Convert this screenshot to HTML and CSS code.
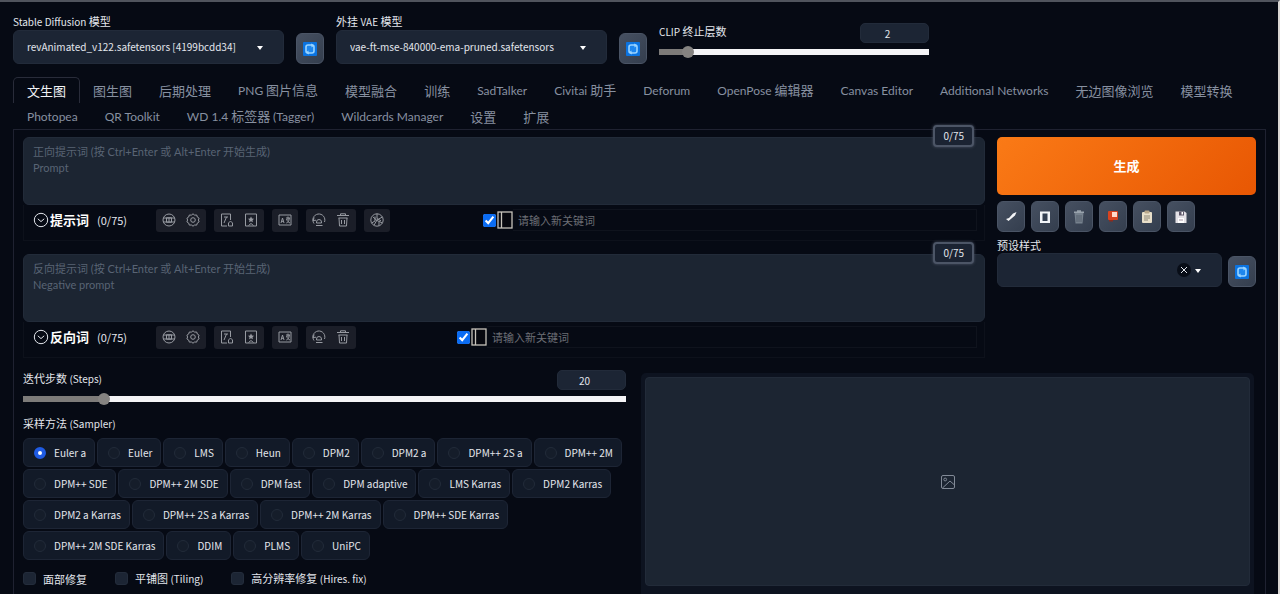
FILE: index.html
```html
<!DOCTYPE html>
<html lang="zh-CN">
<head>
<meta charset="utf-8">
<meta name="viewport" content="width=device-width, initial-scale=1">
<title>Stable Diffusion</title>
<link rel="stylesheet" href="styles.css">
</head>
<body>
<svg class="sprite" aria-hidden="true">
  <symbol id="i-refresh" viewBox="0 0 14 14"><rect width="14" height="14" rx="1" fill="#0b73e0"/><rect x="3" y="3" width="8" height="8" rx="2" fill="#1d86ee" stroke="#9ad4ff" stroke-width="1.6"/><path d="M8 1.600l3.400 1.600L8.600 5.600zM6 12.400L2.600 10.800 5.400 8.400z" fill="#9ad4ff"/></symbol>
  <symbol id="i-down" viewBox="0 0 16 16"><circle cx="8" cy="8" r="6.700"/><path d="M4.800 6.800L8 9.600l3.200-2.800"/></symbol>
  <symbol id="i-globe" viewBox="0 0 16 16"><circle cx="8" cy="8" r="6"/><path d="M2 6h12M2 10h12M5.500 5.800h5v4.400h-5zM8 5.800v4.400"/></symbol>
  <symbol id="i-gear" viewBox="0 0 16 16"><path d="M8 1.800l1.600 1.300 2.100-.1.600 2 1.800 1.200L13.400 8l.7 1.900-1.800 1.200-.6 2-2.100-.1L8 14.200 6.400 13l-2.100.1-.6-2-1.800-1.200L2.600 8l-.7-1.800L3.700 5l.6-2 2.100.1z"/><circle cx="8" cy="8" r="2.300"/></symbol>
  <symbol id="i-note" viewBox="0 0 16 16"><path d="M8 14H2.500V2h9v6M5 5h4M7.500 5L5 11M13.500 14h-4v-3l2-2 2 2z"/></symbol>
  <symbol id="i-bookmark" viewBox="0 0 16 16"><path d="M2.500 2h11v12h-11z"/><path d="M8 4.500l1 2 2 .3-1.500 1.400.4 2.100L8 9.300l-1.900 1 .4-2.100L5 6.800l2-.3z" fill="currentColor" stroke="none"/><path d="M5.500 13.500L8 11.500l2.500 2"/></symbol>
  <symbol id="i-translate" viewBox="0 0 16 16"><path d="M2 3h12v10H2zM4 11l1.500-5L7 11M4.500 9.300h2M9 6h4M11 4.500V8M9.300 11c2-.6 3-2.500 3-5M9.500 7c.5 2 2 3.400 3.500 4"/></symbol>
  <symbol id="i-history" viewBox="0 0 16 16"><path d="M3 11.500A6 6 0 1 1 13.500 10M3.200 5.500L2 8.500l3-.3M5 13.500h6.500M5.500 10a2.500 2.500 0 0 1 5 0v1h-5z"/></symbol>
  <symbol id="i-trash" viewBox="0 0 16 16"><path d="M2 3.500h12M5.500 3.500V1.800h5v1.700M3.500 6h9M4 6l.5 8h7L12 6M6.500 8v4M9.500 8v4"/></symbol>
  <symbol id="i-openai" viewBox="0 0 16 16"><circle cx="8" cy="8" r="6.200"/><path d="M8 1.800v4.700l4 2.400M13.400 5L8 8l-3 5.200M13.400 11L8 8.500 4 5M2.600 11L6 9V4.500M10 13.800V9.500"/></symbol>
  <symbol id="i-caret" viewBox="0 0 16 18"><rect x="1" y="1" width="14" height="16" fill="#07080f" stroke="#c7c3bb" stroke-width="1.300"/><path d="M4.500 1v16" stroke="#c7c3bb" stroke-width="1.300"/></symbol>
  <symbol id="i-image" viewBox="0 0 16 16"><rect x="1.500" y="1.500" width="13" height="13" rx="1.500"/><circle cx="5.200" cy="5.500" r="1.400"/><path d="M2.500 14L10 7l4.500 4"/></symbol>
</svg>

<main class="app">
  <section class="quick">
    <div class="field">
      <label for="model"><span class="en">Stable Diffusion</span> 模型</label>
      <div class="drop"><select id="model"><option>revAnimated_v122.safetensors [4199bcdd34]</option></select></div>
    </div>
    <button class="tool" aria-label="刷新模型"><svg class="refresh"><use href="#i-refresh"/></svg></button>
    <div class="field">
      <label for="vae">外挂 <span class="en">VAE</span> 模型</label>
      <div class="drop"><select id="vae"><option>vae-ft-mse-840000-ema-pruned.safetensors</option></select></div>
    </div>
    <button class="tool" aria-label="刷新 VAE"><svg class="refresh"><use href="#i-refresh"/></svg></button>
    <div class="slider">
      <div class="slider-head"><label for="clip"><span class="en">CLIP</span> 终止层数</label><input class="num" type="number" value="2" aria-label="CLIP"></div>
      <input id="clip" class="range" type="range" min="1" max="12" value="2" style="--fill:11%">
    </div>
  </section>

  <nav class="tabs">
    <button class="tab active">文生图</button><button class="tab">图生图</button><button class="tab">后期处理</button><button class="tab"><span class="en">PNG</span> 图片信息</button><button class="tab">模型融合</button><button class="tab">训练</button><button class="tab"><span class="en">SadTalker</span></button><button class="tab"><span class="en">Civitai</span> 助手</button><button class="tab"><span class="en">Deforum</span></button><button class="tab"><span class="en">OpenPose</span> 编辑器</button><button class="tab"><span class="en">Canvas Editor</span></button><button class="tab"><span class="en">Additional Networks</span></button><button class="tab">无边图像浏览</button><button class="tab">模型转换</button><button class="tab"><span class="en">Photopea</span></button><button class="tab"><span class="en">QR Toolkit</span></button><button class="tab"><span class="en">WD 1.4</span> 标签器 <span class="en">(Tagger)</span></button><button class="tab"><span class="en">Wildcards Manager</span></button><button class="tab">设置</button><button class="tab">扩展</button>
  </nav>

  <section class="panel">
    <div class="top">
      <div class="prompts">
        <div class="prompt">
          <textarea aria-label="正向提示词" placeholder="正向提示词 (按 Ctrl+Enter 或 Alt+Enter 开始生成)&#10;Prompt"></textarea>
          <span class="count">0/75</span>
          <div class="bar">
            <div class="bar-title"><svg class="line"><use href="#i-down"/></svg><b>提示词</b><span>(0/75)</span></div>
            <div class="groups">
              <div class="group"><button aria-label="语言"><svg class="line"><use href="#i-globe"/></svg></button><button aria-label="设置"><svg class="line"><use href="#i-gear"/></svg></button></div>
              <div class="group"><button aria-label="历史"><svg class="line"><use href="#i-note"/></svg></button><button aria-label="收藏"><svg class="line"><use href="#i-bookmark"/></svg></button></div>
              <div class="group"><button aria-label="翻译"><svg class="line"><use href="#i-translate"/></svg></button></div>
              <div class="group"><button aria-label="复制"><svg class="line"><use href="#i-history"/></svg></button><button aria-label="删除"><svg class="line"><use href="#i-trash"/></svg></button></div>
              <div class="group"><button aria-label="ChatGPT"><svg class="line"><use href="#i-openai"/></svg></button></div>
            </div>
            <div class="keyword"><input type="checkbox" checked aria-label="启用"><svg class="side"><use href="#i-caret"/></svg><input type="text" placeholder="请输入新关键词" aria-label="新关键词"></div>
          </div>
        </div>
        <div class="prompt">
          <textarea aria-label="反向提示词" placeholder="反向提示词 (按 Ctrl+Enter 或 Alt+Enter 开始生成)&#10;Negative prompt"></textarea>
          <span class="count">0/75</span>
          <div class="bar negative">
            <div class="bar-title"><svg class="line"><use href="#i-down"/></svg><b>反向词</b><span>(0/75)</span></div>
            <div class="groups">
              <div class="group"><button aria-label="语言"><svg class="line"><use href="#i-globe"/></svg></button><button aria-label="设置"><svg class="line"><use href="#i-gear"/></svg></button></div>
              <div class="group"><button aria-label="历史"><svg class="line"><use href="#i-note"/></svg></button><button aria-label="收藏"><svg class="line"><use href="#i-bookmark"/></svg></button></div>
              <div class="group"><button aria-label="翻译"><svg class="line"><use href="#i-translate"/></svg></button></div>
              <div class="group"><button aria-label="复制"><svg class="line"><use href="#i-history"/></svg></button><button aria-label="删除"><svg class="line"><use href="#i-trash"/></svg></button></div>
            </div>
            <div class="keyword"><input type="checkbox" checked aria-label="启用"><svg class="side"><use href="#i-caret"/></svg><input type="text" placeholder="请输入新关键词" aria-label="新关键词"></div>
          </div>
        </div>
      </div>

      <div class="actions">
        <button class="generate">生成</button>
        <div class="tools">
          <button class="tool" aria-label="读取参数"><svg viewBox="0 0 16 16"><path d="M3 10l2.500 2L12 6.500 13.500 3 10 4.500 6 9z" fill="#f4f5f7"/></svg></button>
          <button class="tool" aria-label="面板"><svg viewBox="0 0 16 16"><rect x="3" y="2.500" width="10" height="11.500" fill="#f1f4f8"/><rect x="5.500" y="4.500" width="5" height="7.500" fill="#344052"/></svg></button>
          <button class="tool" aria-label="清空"><svg viewBox="0 0 16 16"><path d="M3.500 4h9l-1 10.500h-7z" fill="#76818d"/><path d="M3 3.300h10M6 2h4" stroke="#98a2ac" stroke-width="1.500"/><path d="M6 6v7M8 6v7M10 6v7" stroke="#56616e"/></svg></button>
          <button class="tool" aria-label="附加网络"><svg viewBox="0 0 16 16"><rect x="3" y="2" width="10" height="9" rx="1" fill="#d8431f"/><rect x="7" y="3" width="5" height="5" fill="#ffd9ca"/><path d="M4 11h4v1.500H4z" fill="#8e2a1c"/></svg></button>
          <button class="tool" aria-label="应用样式"><svg viewBox="0 0 16 16"><rect x="3" y="3" width="10" height="11" rx="1" fill="#e9dfc9"/><rect x="5.500" y="1.500" width="5" height="3" rx="1" fill="#b9a88b"/><path d="M5 7h6M5 9h6M5 11h4" stroke="#8c8677"/></svg></button>
          <button class="tool" aria-label="保存样式"><svg viewBox="0 0 16 16"><path d="M2.500 2.500h9L13.500 4v10h-11z" fill="#e4e1e6"/><path d="M6 2.500h5v4H6z" fill="#5d5669"/><path d="M8.500 3h1.500v2.500H8.500z" fill="#fff"/><path d="M5 9h6v5H5z" fill="#fff"/><path d="M6 11h4" stroke="#a493a2"/></svg></button>
        </div>
        <label for="styles">预设样式</label>
        <div class="styles-row">
          <div class="drop"><select id="styles"><option></option></select><button class="clear" aria-label="清除"><svg viewBox="0 0 14 14"><path d="M4 4l6 6M10 4l-6 6"/></svg></button></div>
          <button class="tool" aria-label="刷新样式"><svg class="refresh"><use href="#i-refresh"/></svg></button>
        </div>
      </div>
    </div>

    <div class="bottom">
      <div class="settings">
        <div class="slider">
          <div class="slider-head"><label for="steps">迭代步数 <span class="en">(Steps)</span></label><input class="num" type="number" value="20" aria-label="Steps"></div>
          <input id="steps" class="range" type="range" min="1" max="150" value="20" style="--fill:13.5%">
        </div>
        <fieldset class="sampler">
          <legend>采样方法 <span class="en">(Sampler)</span></legend>
          <div class="chips">
            <label><input type="radio" name="s" checked>Euler a</label><label><input type="radio" name="s">Euler</label><label><input type="radio" name="s">LMS</label><label><input type="radio" name="s">Heun</label><label><input type="radio" name="s">DPM2</label><label><input type="radio" name="s">DPM2 a</label><label><input type="radio" name="s">DPM++ 2S a</label><label><input type="radio" name="s">DPM++ 2M</label><label><input type="radio" name="s">DPM++ SDE</label><label><input type="radio" name="s">DPM++ 2M SDE</label><label><input type="radio" name="s">DPM fast</label><label><input type="radio" name="s">DPM adaptive</label><label><input type="radio" name="s">LMS Karras</label><label><input type="radio" name="s">DPM2 Karras</label><label><input type="radio" name="s">DPM2 a Karras</label><label><input type="radio" name="s">DPM++ 2S a Karras</label><label><input type="radio" name="s">DPM++ 2M Karras</label><label><input type="radio" name="s">DPM++ SDE Karras</label><label><input type="radio" name="s">DPM++ 2M SDE Karras</label><label><input type="radio" name="s">DDIM</label><label><input type="radio" name="s">PLMS</label><label><input type="radio" name="s">UniPC</label>
          </div>
        </fieldset>
        <div class="checks">
          <label><input type="checkbox"><span>面部修复</span></label>
          <label><input type="checkbox"><span>平铺图 <span class="en">(Tiling)</span></span></label>
          <label><input type="checkbox"><span>高分辨率修复 <span class="en">(Hires. fix)</span></span></label>
        </div>
      </div>
      <div class="gallery"><div class="canvas"><svg class="line"><use href="#i-image"/></svg></div></div>
    </div>
  </section>
</main>
</body>
</html>
```
FILE: styles.css
```css
* { box-sizing: border-box; }
body {
  margin: 0;
  background: #060a14;
  color: #e3e6ec;
  font-family: "Noto Sans CJK SC", "Noto Sans", sans-serif;
  font-size: 11px;
  line-height: 16px;
}
button, input, select, textarea { font: inherit; color: inherit; margin: 0; }
button { padding: 0; border: 0; background: none; }
.en { font-size: 10px; }
.sprite { position: absolute; width: 0; height: 0; }
.line { fill: none; stroke: currentColor; stroke-width: 1; }

.app {
  min-height: 100vh;
  display: flex;
  flex-direction: column;
  padding: 11px 12px 0 13px;
  border-top: 2px solid #50545d;
  border-right: 2px solid #d9d6d3;
}

.quick {
  display: grid;
  grid-template-columns: 271fr 28px 271fr 28px 270fr 325fr;
  column-gap: 12px;
  align-items: end;
}
.field { display: flex; flex-direction: column; }
.drop { position: relative; display: flex; flex: 1; }
.drop select {
  appearance: none;
  width: 100%;
  height: 34px;
  padding: 0 36px 0 13px;
  border: 1px solid #222b3a;
  border-radius: 6px;
  background: #1c2534;
  font-size: 10px;
}
.drop::after {
  content: "";
  position: absolute;
  right: 21px;
  top: 16px;
  border: 3px solid transparent;
  border-top: 4px solid #fff;
  border-bottom: 0;
}
.tool {
  width: 28px;
  height: 31px;
  flex: none;
  display: grid;
  place-items: center;
  border: 1px solid #4a5465;
  border-radius: 6px;
  background: linear-gradient(135deg, #465061, #343e4e);
}
.tool svg { width: 16px; height: 16px; }
.tool .refresh { width: 14px; height: 14px; }

.slider { display: flex; flex-direction: column; }
.quick .slider { align-self: start; padding-top: 10px; }
.slider-head { display: flex; justify-content: space-between; align-items: flex-start; }
.num {
  appearance: textfield;
  width: 69px;
  height: 20px;
  padding: 0 14px 0 0;
  border: 1px solid #222b3a;
  border-radius: 5px;
  background: #1c2534;
  font-size: 10px;
  text-align: center;
}
.num::-webkit-inner-spin-button { display: none; }
.range {
  appearance: none;
  width: 100%;
  height: 12px;
  margin-top: 3px;
  background: linear-gradient(90deg, #7d7b79 var(--fill), #f4f4f6 0) center / 100% 6px no-repeat;
  border-radius: 3px;
}
.range::-webkit-slider-thumb {
  appearance: none;
  width: 12px;
  height: 12px;
  border-radius: 50%;
  background: #858381;
}

.tabs { display: flex; flex-wrap: wrap; margin-top: 13px; }
.tab {
  height: 26px;
  margin-right: -1px;
  padding: 0 13px;
  border: 1px solid transparent;
  border-bottom: 0;
  border-radius: 5px 5px 0 0;
  color: #8790a0;
  font-size: 13px;
  line-height: 24px;
  white-space: nowrap;
}
.tab .en { font-family: Lato, "Noto Sans", sans-serif; font-size: 12px; }
.tab.active { color: #f1f3f6; border-color: #292c3a; }

.panel {
  flex: 1;
  display: flex;
  flex-direction: column;
  padding: 7px 9px 0;
  border: 1px solid #1f2231;
  border-bottom: 0;
}
.top { display: grid; grid-template-columns: 962fr 259fr; column-gap: 12px; }
.prompts { display: flex; flex-direction: column; gap: 13px; }
.prompt { position: relative; }
.prompt textarea {
  display: block;
  width: 100%;
  height: 68px;
  padding: 6px 9px;
  border: 1px solid #222b39;
  border-radius: 6px;
  background: #1c2532;
  font-family: Lato, "Noto Sans CJK SC", sans-serif;
  resize: none;
}
.prompt textarea::placeholder { color: #596474; }
.count {
  position: absolute;
  top: -12px;
  right: 11px;
  padding: 1px 8px;
  border: 2px solid #4c5566;
  border-radius: 4px;
  background: #1b2332;
  box-shadow: 0 0 3px #4c5566;
  font-size: 10px;
}
.bar {
  display: flex;
  align-items: center;
  height: 36px;
  padding: 0 7px 5px 9px;
  border: 1px solid #0d111b;
  border-top: 0;
}
.bar-title { display: flex; align-items: center; width: 123px; }
.bar-title svg { width: 16px; height: 16px; margin-right: 1px; }
.bar-title b { font-size: 13px; color: #fff; margin-right: 8px; }
.groups { display: flex; gap: 8px; margin-right: 93px; }
.negative .groups { margin-right: 101px; }
.group { display: flex; padding: 0 1px; border-radius: 3px; background: #1b1e28; color: #979aa1; }
.group button { width: 24px; height: 23px; display: grid; place-items: center; }
.group svg { width: 16px; height: 16px; }
.keyword { flex: 1; display: flex; align-items: center; }
.keyword input[type="checkbox"] { width: 13px; height: 13px; accent-color: #0b6cf2; }
.keyword .side { width: 16px; height: 18px; margin-left: 1px; }
.keyword input[type="text"] {
  flex: 1;
  min-width: 0;
  height: 22px;
  padding: 0 5px;
  border: 1px solid #0f131d;
  border-left: 0;
  background: none;
}
.keyword input::placeholder { color: #6c6e75; }

.actions { display: flex; flex-direction: column; }
.generate {
  height: 58px;
  border-radius: 5px;
  background: linear-gradient(135deg, #fa7a16, #e85703);
  color: #fff;
  font-size: 13px;
  font-weight: 700;
}
.tools { display: flex; gap: 6px; margin: 6px 0 5px; }
.styles-row { display: flex; align-items: flex-end; gap: 6px; }
.clear {
  position: absolute;
  right: 31px;
  top: 10px;
  width: 14px;
  height: 14px;
  border-radius: 50%;
  background: #080d17;
}
.clear svg { display: block; stroke: #e3e6ec; stroke-width: 1; }

.bottom {
  flex: 1;
  display: grid;
  grid-template-columns: 603fr 613fr;
  column-gap: 15px;
  padding: 12px 2px 0 0;
}
.sampler { margin: 10px 0 0; padding: 0; border: 0; min-width: 0; }
.sampler legend { padding: 0; margin-bottom: 6px; }
.chips { display: flex; flex-wrap: wrap; gap: 2px; font-size: 10px; }
.chips label {
  display: flex;
  align-items: center;
  height: 29px;
  gap: 8px;
  padding: 0 8px 0 10px;
  border: 1px solid #1d2535;
  border-radius: 6px;
  background: #121a28;
  white-space: nowrap;
}
.chips input {
  appearance: none;
  width: 12px;
  height: 12px;
  border: 1px solid #222b39;
  border-radius: 50%;
  background: #151d2a;
}
.chips input:checked { border: 4px solid #1f5be3; background: #fff; }
.checks { display: flex; gap: 28px; margin-top: 10px; }
.checks label { display: flex; align-items: center; gap: 7px; }
.checks input {
  appearance: none;
  width: 13px;
  height: 13px;
  border: 1px solid #232c3b;
  border-radius: 3px;
  background: #1c2534;
}
.gallery { display: flex; margin-top: 3px; padding: 4px 4px 8px; border-radius: 5px 5px 0 0; background: #0d1320; }
.canvas {
  flex: 1;
  display: grid;
  place-items: center;
  border: 1px solid #222b39;
  border-radius: 4px;
  background: #1c2532;
  color: #828a97;
}
.canvas svg { width: 16px; height: 16px; }
```
